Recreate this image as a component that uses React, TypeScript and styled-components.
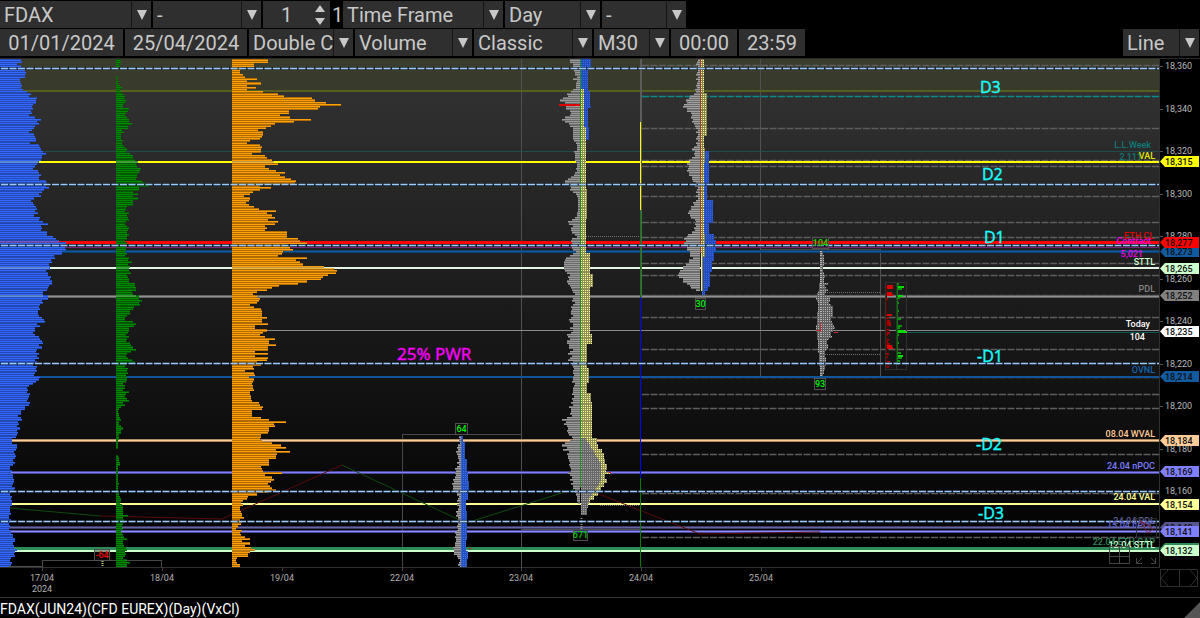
import React from "react";
import styled, { createGlobalStyle } from "styled-components";

const GlobalStyle = createGlobalStyle`
  body { margin: 0; background: #000; }
  * { box-sizing: border-box; }
`;

const Page = styled.main`
  display: flex;
  flex-direction: column;
  background: #000;
  color: #c8c8c8;
  font-family: Roboto, "Liberation Sans", sans-serif;
`;

const Toolbars = styled.header`
  display: flex;
  flex-direction: column;
  gap: 1px;
  padding: 1px 1px 2px 0;
  border-bottom: 1px solid #2b2b2b;
`;

const ToolRow = styled.div`
  display: flex;
  gap: 2px;
  height: 27px;
`;

const Cell = styled.div<{ $w: number }>`
  display: grid;
  grid-template-columns: minmax(0, 1fr) 20px;
  width: ${(p) => p.$w}px;
  background: #2f2f2f;
`;

const Picker = styled.select`
  grid-area: 1 / 1 / 2 / 3;
  appearance: none;
  width: 100%;
  padding: 0 0 0 4px;
  border: 0;
  border-radius: 0;
  background: none;
  color: #c8c8c8;
  font: 20px Roboto, "Liberation Sans", sans-serif;
`;

const ArrowBox = styled.span<{ $plain?: boolean }>`
  grid-area: 1 / 2 / 2 / 3;
  display: grid;
  align-content: center;
  justify-content: center;
  border-left: ${(p) => (p.$plain ? "0" : "1px solid #151515")};
  pointer-events: none;
`;

const Field = styled.input<{ $w?: number }>`
  width: ${(p) => (p.$w ? `${p.$w}px` : "auto")};
  min-width: 0;
  padding: 0;
  border: 0;
  background: #2f2f2f;
  color: #c8c8c8;
  text-align: center;
  font: 20px Roboto, "Liberation Sans", sans-serif;
`;

const Multiplier = styled.span`
  width: 9px;
  font-size: 20px;
  line-height: 28px;
`;

const Spacer = styled.div`
  flex: 1;
`;

const ChartArea = styled.section`
  display: flex;
  height: 539px;
  border-bottom: 1px solid #333;
`;

const Plot = styled.svg`
  flex: 1;
  min-width: 0;
  height: 538px;
  font: 9px Roboto, "Liberation Sans", sans-serif;
`;

const PriceAxis = styled.svg`
  width: 40px;
  height: 538px;
  font: 9px Roboto, "Liberation Sans", sans-serif;
`;

const Status = styled.footer`
  display: flex;
  justify-content: space-between;
  align-items: flex-end;
  height: 20px;
  color: #fff;
  font-size: 14px;
  line-height: 18px;
`;

function Select({ label, value, w }: { label: string; value: string; w: number }) {
  return (
    <Cell $w={w}>
      <Picker aria-label={label} defaultValue={value}>
        <option>{value}</option>
      </Picker>
      <ArrowBox>
        <svg width="10" height="10" aria-hidden="true">
          <path d="M0 0H10L5 10Z" fill="#c8c8c8" />
        </svg>
      </ArrowBox>
    </Cell>
  );
}

/* Price scale: 18,360 sits at y = 66 and each point is 2.13 px tall. */
const PITCH = 2.13;
const rowY = (n: number) => 60 + n * PITCH;
const ROWS = 239;

/* Stretches a list of readings over the rows from..to. */
function spread(list: number[], from: number, to: number) {
  const out: [number, number][] = [];
  for (let n = from; n <= to; n++) {
    out.push([n, list[Math.round(((n - from) * (list.length - 1)) / (to - from))] / 3]);
  }
  return out;
}

const orangeRows = [
  36, 36, 22, 22, 9, 8, 8, 11, 13, 25, 15, 29, 15, 24, 15, 31, 46, 52, 80, 83, 94, 109, 88, 86, 57, 57, 48, 58, 79, 62, 43, 39,
  34, 26, 31, 31, 30, 28, 18, 15, 28, 30, 29, 29, 20, 33, 35, 40, 42, 46, 33, 37, 44, 53, 48, 53, 59, 64, 63, 28, 39, 28, 21,
  18, 12, 18, 17, 14, 17, 22, 27, 44, 35, 40, 43, 36, 46, 43, 33, 35, 33, 55, 55, 55, 66, 68, 75, 53, 58, 61, 51, 50, 46, 75,
  64, 68, 71, 92, 102, 105, 104, 96, 91, 89, 75, 66, 47, 40, 35, 25, 21, 25, 28, 27, 25, 18, 22, 29, 30, 30, 35, 30, 30, 36,
  23, 23, 35, 31, 28, 33, 43, 37, 37, 44, 36, 36, 23, 36, 23, 36, 35, 25, 29, 21, 22, 13, 22, 23, 17, 22, 21, 20, 21, 21, 22,
  18, 18, 19, 19, 20, 27, 28, 31, 30, 20, 20, 20, 29, 37, 54, 42, 43, 37, 37, 36, 29, 29, 28, 30, 40, 49, 54, 44, 58, 45, 44,
  44, 37, 37, 37, 29, 30, 31, 50, 33, 40, 42, 39, 36, 38, 40, 44, 36, 25, 16, 15, 11, 9, 11, 8, 8, 9, 10, 10, 12, 8, 10, 9, 6,
  4, 10, 8, 9, 13, 18, 10, 18, 13, 19, 23, 18, 16, 16, 5, 4, 5, 8, 8,
].map((w) => w * 3);

const blueUpper = [
  62, 65, 52, 62, 72, 75, 78, 76, 74, 60, 60, 62, 66, 64, 68, 82, 92, 88, 112, 108, 108, 98, 95, 100, 92, 97, 88, 105, 122,
  110, 118, 105, 103, 95, 86, 102, 106, 108, 107, 90, 118, 120, 124, 130, 138, 126, 126, 122, 118, 112, 106, 100, 113, 118,
  124, 118, 116, 137, 140, 138, 146, 132, 126, 118, 124, 102, 93, 98, 101, 108, 110, 104, 115, 102, 120, 118, 128, 144, 122,
  126, 124, 141, 140, 158, 167, 178, 197, 190, 194, 199, 186, 185, 162, 164, 153, 157, 148, 150, 150, 137, 143, 145, 153,
  151, 157, 155, 147, 143, 142, 130, 130, 143, 144, 126, 130, 121, 118, 121,
];
const blueLower = [
  115, 114, 117, 126, 132, 135, 112, 119, 104, 104, 98, 105, 118, 120, 126, 128, 118, 126, 112, 107, 116, 112, 118, 104, 112,
  100, 112, 108, 110, 104, 103, 119, 116, 108, 98, 88, 82, 84, 80, 90, 86, 84, 80, 90, 88, 74, 74, 64, 62, 55, 62, 67, 55, 58,
  50, 60, 50, 54, 50, 48, 36, 36, 50, 50, 48, 42, 44, 48, 44, 38, 44, 38, 30, 30, 36, 32, 38, 38, 42, 42, 38, 36, 46, 42, 32,
  30, 36, 33, 36, 36, 36, 30, 30, 30, 32, 27, 27, 32, 30, 28, 30, 27, 32, 33, 40, 38, 46, 44, 38, 42, 42, 50, 46, 42, 44, 32,
  30, 35, 32, 28,
];
const greenUpper = [
  12, 15, 8, 12, 0, 0, 0, 0, 5, 3, 5, 5, 12, 18, 12, 15, 22, 28, 25, 30, 26, 20, 20, 38, 36, 30, 28, 32, 38, 40, 47, 36, 36,
  18, 24, 16, 16, 14, 22, 18, 20, 26, 32, 30, 42, 50, 50, 58, 66, 60, 62, 75, 72, 68, 64, 62, 60, 78, 88, 98, 68, 70, 50, 66,
  52, 66, 50, 52, 50, 32, 30, 28, 38, 34, 35, 40, 30, 28, 32, 38, 36, 34, 38, 32, 34, 26, 34, 30, 30, 30, 28, 32, 28, 38, 36,
  48, 36, 42, 40, 40, 44, 32, 36, 38, 38, 56, 58, 60, 60, 48, 52, 68, 68, 78, 70, 72, 55, 50, 42, 42, 34, 26, 28, 50, 60, 54,
  38, 40, 36, 30, 38,
];
const greenLower = [
  34, 30, 42, 44, 50, 60, 46, 32, 30, 35, 48, 58, 30, 28, 36, 32, 36, 30, 34, 32, 30, 20, 28, 26, 22, 38, 30, 28, 34, 38, 20,
  28, 14, 8, 6, 8, 10, 12, 14, 8, 10, 14, 20, 14, 14, 10, 10, 8, 6, 6, 6, 5, 0, 0, 5, 10, 8, 12, 12, 5, 6, 6, 6, 6, 5, 6, 6,
  8, 6, 6, 6, 8, 10, 12, 14, 16, 12, 18, 20, 20, 22, 22, 36, 22, 24, 24, 22, 18, 22, 16, 18, 22, 24, 34, 22, 22, 24, 30, 34,
  26, 30, 28, 20, 34, 42, 32, 34,
];
const blueRows = [...spread(blueUpper, 0, 117), ...spread(blueLower, 118, ROWS - 1)];
const greenRows = [...spread(greenUpper, 0, 130), ...spread(greenLower, 131, ROWS - 1)];
const goldRows = spread(orangeRows, 0, ROWS - 1);

/* Horizontal volume profile: a dim body with one bright line per price. */
function Profile({ x, rows, body, line }: { x: number; rows: [number, number][]; body: string; line: string }) {
  const shown = rows.filter(([, w]) => w !== 0);
  const bodyPath = shown.map(([n, w]) => `M${x} ${rowY(n) - 1.06}h${w}v${PITCH}h${-w}z`).join("");
  const linePath = shown.map(([n, w]) => `M${x} ${Math.floor(rowY(n)) + 0.5}h${w}`).join("");
  return (
    <g shapeRendering="crispEdges">
      <path d={bodyPath} fill={body} />
      <path d={linePath} stroke={line} />
    </g>
  );
}

type Pt = [number, number];

function widthAt(pts: Pt[], y: number, step?: boolean) {
  for (let i = 1; i < pts.length; i++) {
    if (y <= pts[i][0]) {
      if (step) return pts[i - 1][1];
      const t = (y - pts[i - 1][0]) / (pts[i][0] - pts[i - 1][0]);
      return pts[i - 1][1] + t * (pts[i][1] - pts[i - 1][1]);
    }
  }
  return pts[pts.length - 1][1];
}

/* Time-at-price profile of one day, built out of small cells. dir -1 grows to the left. */
function DayProfile({
  x, pts, color, dim, dir = 1, step, cells,
}: { x: number; pts: Pt[]; color: string; dim: string; dir?: number; step?: boolean; cells?: boolean }) {
  let body = "";
  let line = "";
  for (let n = 0; n < ROWS; n++) {
    const y = rowY(n);
    if (y < pts[0][0] || y > pts[pts.length - 1][0]) continue;
    const wobble = cells || step ? 0 : ((n * 7) % 5) - 2;
    const w = Math.max(1, Math.round(widthAt(pts, y, step) + wobble * 0.6)) * dir;
    body += `M${x} ${y - 1.06}h${w}v${PITCH}h${-w}z`;
    line += `M${x} ${Math.floor(y) + 0.5}h${w}`;
  }
  return (
    <g shapeRendering="crispEdges">
      <path d={body} fill={dim} />
      <path d={line} stroke={color} strokeDasharray={cells ? "1 1" : undefined} />
    </g>
  );
}

const day23Left: number[] = [
  30, 30, 22, 22, 18, 18, 14, 14, 10, 20, 10, 12, 12, 12, 20, 28, 40, 36, 52, 60, 46, 62, 42, 42, 30, 28, 30, 44, 55, 45, 34,
  30, 22, 22, 20, 20, 20, 20, 18, 12, 10, 8, 10, 18, 16, 14, 15, 15, 12, 10, 8, 12, 10, 14, 18, 26, 36, 44, 46, 30, 26, 30,
  20, 12, 10, 6, 6, 6, 6, 6, 6, 6, 8, 10, 14, 24, 36, 34, 20, 28, 28, 24, 14, 10, 24, 28, 24, 20, 24, 20, 12, 20, 30, 42, 46,
  48, 48, 48, 48, 44, 40, 30, 36, 34, 38, 36, 30, 28, 24, 20, 16, 24, 20, 24, 14, 22, 28, 24,
];
const day23LeftLow: number[] = [
  26, 28, 22, 28, 32, 30, 20, 22, 22, 30, 20, 28, 40, 36, 30, 40, 38, 34, 32, 20, 30, 38, 36, 24, 30, 36, 20, 24, 20, 18, 22,
  20, 18, 20, 20, 20, 24, 16, 18, 22, 20, 22, 24, 18, 24, 22, 26, 20, 30, 32, 26, 28, 30, 24, 40, 54, 42, 48, 38, 36, 40, 36,
  36, 32, 24, 20, 30, 46, 54, 40, 52, 34, 40, 36, 36, 32, 34, 30, 32, 30, 28, 26, 36, 30, 24, 30, 22, 28, 20, 22, 20, 16, 14,
  12, 10, 8, 8, 6,
];
const day23Gray = [...spread(day23Left, 0, 117), ...spread(day23LeftLow, 118, 208)].map(([n, w]) => [n, -w] as [number, number]);

const day23Blue: Pt[] = [[59, 10], [69, 7], [90, 9], [106, 10], [108, 7], [128, 8], [139, 5], [146, 5]];
const day23Yellow: Pt[] = [
  [89, 3], [128, 5], [189, 6], [219, 5], [253, 9], [273, 12], [286, 9], [333, 11], [344, 6], [367, 8], [382, 6], [393, 10],
  [402, 11], [438, 16], [444, 17], [449, 21], [453, 23], [459, 24], [463, 26], [469, 25], [472, 29], [474, 24], [478, 26],
  [482, 23], [487, 20], [492, 17], [496, 13], [500, 9], [505, 5], [506, 5],
];
const day23Inner: Pt[] = [
  [438, 4], [445, 9], [454, 14], [463, 20], [480, 20], [487, 16], [497, 9], [503, 7], [514, 6],
];
const day22Gray: Pt[] = [
  [436, 1], [443, 2], [452, 4], [454, 5], [458, 2], [463, 3], [470, 5], [477, 6], [482, 8], [487, 9], [492, 6], [495, 3],
  [510, 3], [515, 5], [520, 3], [530, 4], [538, 6], [543, 5], [549, 8], [555, 6], [559, 2], [567, 2],
];
const day22Blue: Pt[] = [
  [435, 2], [443, 4], [460, 6], [473, 7], [480, 8], [492, 7], [500, 5], [510, 6], [530, 6], [540, 5], [550, 7], [560, 6], [567, 5],
];
const day24Gray: Pt[] = [
  [59, 3], [86, 3], [93, 5], [98, 11], [103, 15], [106, 16], [111, 12], [116, 8], [124, 7], [128, 3], [143, 3], [149, 7],
  [154, 5], [159, 9], [164, 12], [171, 12], [176, 10], [183, 5], [189, 3], [199, 3], [211, 11], [216, 10], [223, 3], [233, 8],
  [238, 15], [243, 16], [248, 13], [253, 10], [258, 8], [263, 13], [268, 17], [274, 23], [279, 18], [283, 15], [286, 10],
  [289, 6], [292, 1],
];
const day24Yellow: Pt[] = [[59, 3], [92, 6], [136, 3], [149, 4], [163, 3], [233, 4], [256, 2], [291, 2]];
const day24Blue: Pt[] = [
  [151, 7], [184, 5], [199, 11], [224, 7], [234, 12], [240, 14], [250, 12], [262, 10], [272, 8], [286, 6], [292, 3], [296, 1],
];
const day25Left: Pt[] = [
  [250, 1], [279, 1], [288, 2], [293, 3], [298, 5], [303, 3], [320, 4], [330, 5], [335, 4], [347, 3], [357, 2], [376, 1],
];
const day25Right: Pt[] = [
  [250, 2], [258, 3], [271, 2], [278, 4], [281, 1], [283, 8], [286, 4], [290, 7], [294, 4], [299, 10], [303, 8], [307, 12],
  [315, 12], [319, 9], [325, 13], [329, 14], [334, 9], [337, 11], [340, 6], [347, 7], [352, 4], [364, 5], [372, 3], [377, 1],
];

const guides = [65, 128, 160, 166, 196, 222, 237, 263, 275, 295, 317, 349, 377, 394, 408, 454, 493, 537];
const bands = [68, 184, 245, 363, 491, 521];

const levels: { y: number; h: number; color: string; core?: string; from?: number }[] = [
  { y: 90, h: 2, color: "#565f1b" },
  { y: 151, h: 1, color: "#1f4c4c" },
  { y: 161, h: 2, color: "#ffff00" },
  { y: 241, h: 3, color: "#ff0000" },
  { y: 247, h: 1, color: "#7a237a" },
  { y: 250, h: 3, color: "#0c3f6c", core: "#115a9f" },
  { y: 267, h: 2, color: "#e4f5e4" },
  { y: 295, h: 3, color: "#626262", core: "#909090" },
  { y: 330, h: 1, color: "#8a8a8a", from: 232 },
  { y: 376, h: 2, color: "#0f5597" },
  { y: 439, h: 3, color: "#b08a62", core: "#ffcc99" },
  { y: 471, h: 3, color: "#4a4a98", core: "#8080ff" },
  { y: 503, h: 2, color: "#ffff99" },
  { y: 526, h: 3, color: "#3c3c62", core: "#66669c" },
  { y: 530, h: 3, color: "#4a4a98", core: "#8c8cff" },
  { y: 547, h: 3, color: "#2e8b57" },
  { y: 550, h: 2, color: "#ccffcc" },
];

/* Labels measured back from the right edge of the plot. */
const labels: { t: string; x: number; y: number; color: string }[] = [
  { t: "L.L.Week", x: -9, y: 148, color: "#0f7a7a" },
  { t: "2,111", x: -18, y: 160, color: "#0f7a7a" },
  { t: "VAL", x: -5, y: 159, color: "#e8e800" },
  { t: "ETH CL", x: -6, y: 239, color: "#e00000" },
  { t: "Contract", x: -9, y: 244, color: "#f000f0" },
  { t: "5,021", x: -17, y: 257, color: "#f000f0" },
  { t: "STTL", x: -5, y: 265, color: "#ccffcc" },
  { t: "PDL", x: -5, y: 292, color: "#858585" },
  { t: "Today", x: -10, y: 327, color: "#ffffff" },
  { t: "104", x: -15, y: 340, color: "#ffffff" },
  { t: "OVNL", x: -5, y: 373, color: "#1463ae" },
  { t: "08.04 WVAL", x: -5, y: 437, color: "#ffcc99" },
  { t: "24.04 nPOC", x: -5, y: 469, color: "#7c7cff" },
  { t: "24.04 VAL", x: -5, y: 500, color: "#ffff99" },
  { t: "24.04 PDL", x: -5, y: 524, color: "#5c5c98" },
  { t: "15.04 nPOC", x: -5, y: 528, color: "#6868d8" },
  { t: "22.04 ETH GAP", x: -5, y: 545, color: "#2e8b57" },
  { t: "12.04 STTL", x: -5, y: 548, color: "#ccffcc" },
];

const tags: { t: string; y: number; color: string }[] = [
  { t: "18,315", y: 161, color: "#ffff00" },
  { t: "18,273", y: 251, color: "#115a9f" },
  { t: "18,277", y: 242, color: "#ff0000" },
  { t: "18,265", y: 268, color: "#ccffcc" },
  { t: "18,252", y: 295, color: "#808080" },
  { t: "18,235", y: 331, color: "#ffffff" },
  { t: "18,214", y: 376, color: "#115a9f" },
  { t: "18,184", y: 440, color: "#ffcc99" },
  { t: "18,169", y: 471, color: "#8080ff" },
  { t: "18,154", y: 504, color: "#ffff99" },
  { t: "18,142", y: 527, color: "#55558f" },
  { t: "18,141", y: 531, color: "#8080ff" },
  { t: "18,133", y: 548, color: "#2e8b57" },
  { t: "18,132", y: 550, color: "#ccffcc" },
];

const dates: [number, string][] = [
  [42, "17/04"], [162, "18/04"], [282, "19/04"], [402, "22/04"], [521, "23/04"], [641, "24/04"], [761, "25/04"],
];

const counts: { t: string; x: number; y: number; w: number; color: string }[] = [
  { t: "-64", x: 94, y: 549, w: 16, color: "#f00000" },
  { t: "64", x: 455, y: 423, w: 13, color: "#00f000" },
  { t: "671", x: 573, y: 529, w: 15, color: "#00d000" },
  { t: "30", x: 695, y: 298, w: 11, color: "#00f000" },
  { t: "104", x: 812, y: 237, w: 17, color: "#20d800" },
  { t: "93", x: 814, y: 378, w: 12, color: "#00f000" },
];

const deviations: [string, number, number][] = [
  ["D3", 980, 93], ["D2", 982, 180], ["D1", 984, 243], ["-D1", 977, 362], ["-D2", 976, 450], ["-D3", 978, 519],
];

const sells: Pt[] = [
  [285, 7], [287, 7], [292, 6], [294, 7], [298, 2], [302, 1], [308, 1], [314, 6], [317, 3], [320, 4], [322, 5], [324, 5],
  [329, 3], [332, 4], [334, 2], [337, 1], [339, 3], [341, 2], [343, 4], [345, 6], [347, 7], [353, 3], [356, 2], [361, 4],
  [363, 5], [366, 3],
];
const buys: Pt[] = [
  [283, 2], [286, 7], [288, 5], [291, 1], [295, 6], [297, 3], [302, 2], [306, 1], [310, 2], [313, 1], [318, 4], [320, 1],
  [325, 5], [327, 3], [330, 7], [331, 10], [334, 2], [338, 1], [342, 2], [348, 1], [352, 4], [355, 6], [357, 5], [360, 3],
  [363, 2],
];

/* Price levels that shine through the three volume profiles: x, y, width. */
const glints: [number, number, number][] = [
  [0, 161, 38], [116, 161, 22], [232, 161, 42],
  [0, 241, 60], [232, 241, 70],
  [0, 267, 49], [116, 267, 14], [232, 267, 100],
  [0, 295, 43], [116, 295, 20],
];

function DashedBand({ y }: { y: number }) {
  return (
    <>
      <rect x="0" y={y - 1} width="100%" height="3" fill="#101820" fillOpacity="0.55" />
      <line x1="1" x2="100%" y1={y + 0.5} y2={y + 0.5} stroke="#9accff" strokeWidth="1.6" strokeDasharray="7 1.5" />
    </>
  );
}

function Chart() {
  return (
    <Plot role="img" aria-label="FDAX volume profile chart">
      <defs>
        <linearGradient id="backdrop" x1="0" y1="0" x2="0" y2="1">
          <stop offset="0" stopColor="#343434" />
          <stop offset="0.5" stopColor="#1a1a1a" />
          <stop offset="1" stopColor="#000000" />
        </linearGradient>
      </defs>
      <g transform="translate(0 -59)">
        <rect x="0" y="59" width="100%" height="508" fill="url(#backdrop)" />
        <rect x="0" y="59" width="100%" height="31" fill="#4a5020" fillOpacity="0.3" />

        {guides.map((y) => (
          <line
            key={y} x1="642" x2="100%" y1={y + 0.5} y2={y + 0.5}
            stroke="#5e5e5e" strokeWidth="1.6" strokeDasharray="7 1.5"
          />
        ))}
        <line x1="642" x2="100%" y1="96.5" y2="96.5" stroke="#0b8a8a" strokeWidth="1.6" strokeDasharray="7 1.5" />

        <g shapeRendering="crispEdges">
          <path d="M521.5 59V567M760.5 59V377M880.5 249V377" stroke="#505050" fill="none" />
          <path d="M402.5 567V434.5H521M761 249.5H880M42.5 567V560.5H161.5V567" stroke="#484848" fill="none" />
          <path d="M0 566.5H42M521 529.5H641" stroke="#505050" fill="none" />

          {levels.map((l) => (
            <g key={l.y}>
              <rect x={l.from ?? 0} y={l.y} width="100%" height={l.h} fill={l.color} />
              {l.core && <rect x="0" y={l.y + 1} width="100%" height="1" fill={l.core} />}
            </g>
          ))}
          <path d="M907 332.5H2400" stroke="#0a5858" />
          <path d="M586 236.5H641M821 292.5H880M821 354.5H880M600 505.5H641" stroke="#707070" strokeDasharray="1 1" fill="none" />
        </g>

        <g fill="none" strokeWidth="1">
          <path d="M10 508L100 516" stroke="#0e4a0e" />
          <path d="M100 516L222 519L342 465" stroke="#5a0c0c" />
          <path d="M342 465L466 523L581 487" stroke="#0e4a0e" />
          <path d="M581 487L700 534L820 532" stroke="#5a0c0c" />
        </g>

        <Profile x={0} rows={blueRows} body="rgba(35,75,190,0.95)" line="#3468ff" />
        <Profile x={116} rows={greenRows} body="rgba(0,92,0,0.92)" line="#008a00" />
        <Profile x={232} rows={goldRows} body="rgba(184,112,0,0.95)" line="#ff9f0a" />

        <Profile x={580} rows={day23Gray} body="#6a6a6a" line="#9a9a9a" />
        <rect x="559" y="104" width="21" height="2" fill="#e00000" />
        <DayProfile x={581} pts={day23Blue} color="#3a66e8" dim="#244cb8" step cells />
        <DayProfile x={581} pts={day23Yellow} color="#ffff99" dim="#8f8f56" step cells />
        <DayProfile x={581} pts={day23Inner} color="#a6a6a6" dim="#686868" cells />
        <path d="M580.5 59V487" stroke="#18901c" />
        <path d="M581.5 518V530" stroke="#909090" strokeWidth="2" strokeDasharray="1 1" />
        <rect x="609" y="472" width="2" height="1" fill="#ff0000" />

        <DayProfile x={461} pts={day22Gray} color="#a0a0a0" dim="#6c6c6c" dir={-1} />
        <DayProfile x={461} pts={day22Blue} color="#3a70ff" dim="#2450b8" step cells />
        <path d="M461.5 436V567" stroke="#3565d8" />
        <rect x="469" y="548" width="2" height="1" fill="#ff0000" />

        <DayProfile x={700} pts={day24Gray} color="#a0a0a0" dim="#6c6c6c" dir={-1} />
        <DayProfile x={702} pts={day24Blue} color="#3a66e8" dim="#244cb8" step cells />
        <DayProfile x={701} pts={day24Yellow} color="#ffff99" dim="#85854c" step cells />
        <path d="M700.5 59V253" stroke="#a03a30" />
        <path d="M701.5 253V291" stroke="#e8e8a0" />

        <DayProfile x={821} pts={day25Left} color="#b4b4b4" dim="#606060" dir={-1} cells />
        <DayProfile x={821} pts={day25Right} color="#b4b4b4" dim="#606060" cells />
        <path d="M820.5 322V332M816 330.5H821M834 332.5H838" stroke="#c03030" />
        <path d="M102.5 561V567" stroke="#c8c88c" strokeWidth="2" strokeDasharray="1 1" />

        <g shapeRendering="crispEdges">
          <rect x="640" y="59" width="2" height="63" fill="#5c5c5c" />
          <rect x="641" y="122" width="1" height="175" fill="#5c5c5c" />
          <rect x="640" y="122" width="1" height="88" fill="#ffff00" />
          <rect x="640" y="210" width="1" height="87" fill="#008000" />
          <rect x="640" y="297" width="1" height="181" fill="#0000ff" />
          <rect x="640" y="478" width="1" height="89" fill="#008000" />
        </g>

        <g shapeRendering="crispEdges">
          <path d="M885.5 282.5H906.5V369.5H885.5ZM896.5 282V369" fill="none" stroke="#303030" />
          {sells.map(([y, w]) => (
            <rect key={y} x="886" y={y} width={w} height="2" fill={w > 5 ? "#dc0000" : "#a00000"} />
          ))}
          <path d="M886.5 285V368" stroke="#600000" />
          {buys.map(([y, w]) => (
            <rect key={y} x="897" y={y} width={w} height="2" fill={w > 5 ? "#00dc00" : "#009a00"} />
          ))}
          <path d="M897.5 283V364" stroke="#008000" />
        </g>

        {glints.map(([x, y, w]) => (
          <rect key={`${x}-${y}`} x={x} y={y} width={w} height="2" fill={y === 241 ? "#ff4040" : "#c8e8c8"} fillOpacity="0.3" />
        ))}
        {bands.map((y) => (
          <DashedBand key={y} y={y} />
        ))}

        {counts.map((c) => (
          <g key={c.t}>
            <rect x={c.x + 0.5} y={c.y + 0.5} width={c.w - 1} height="11" fill="#141414" fillOpacity="0.4" stroke="#505050" />
            <text x={c.x + c.w / 2} y={c.y + 9} fill={c.color} textAnchor="middle" fontWeight="500">{c.t}</text>
          </g>
        ))}

        <g fontFamily='"Open Sans", "Noto Sans", sans-serif' strokeWidth="0.4">
          <text x="397" y="360" fontSize="17" fill="#ff00ff" stroke="#ff00ff">25% PWR</text>
          {deviations.map(([t, x, y]) => (
            <text key={t} x={x} y={y} fontSize="16" fill="#18ffff" stroke="#18ffff">{t}</text>
          ))}
        </g>

        <svg x="100%" y="0" width="1" height="600" overflow="visible">
          {labels.map((l) => (
            <text key={l.t} x={l.x} y={l.y} fill={l.color} textAnchor="end" fontWeight="500">{l.t}</text>
          ))}
          <g fill="none" stroke="#444">
            <path d="M-50.5 546.5H-30.5V563.5H-50.5ZM-40.5 546V564M-50 556.5H-31" />
            <path d="M-18 558L-23 563M-23.5 558V563.5H-18M-9 558L-4 563M-9 563.5H-4.5V558" />
            <path d="M-23.5 518.5H-3.5V537.5H-23.5Z" stroke="#2c2c34" />
            <path d="M-20 521L-12 525L-7 529L-12 533L-20 521" stroke="#802030" />
          </g>
          <path d="M-0.5 59V567" stroke="#303030" />
        </svg>

        <path d="M0 567.5H4000" stroke="#303030" />
        {dates.map(([x, t]) => (
          <g key={t}>
            <path d={`M${x + 0.5} 567V571`} stroke="#444" />
            <text x={x} y="581" fill="#b0b0b0" textAnchor="middle">{t}</text>
          </g>
        ))}
        <text x="42" y="592" fill="#b0b0b0" textAnchor="middle">2024</text>
      </g>
    </Plot>
  );
}

function Prices() {
  const ticks = Array.from({ length: 10 }, (_, i) => 18360 - i * 20);
  return (
    <PriceAxis role="img" aria-label="Price axis">
      <g transform="translate(0 -59)">
        {ticks.map((p, i) => (
          <g key={p}>
            <path d={`M0 ${Math.round(66 + i * 42.5) + 0.5}h3`} stroke="#555" />
            <text x="5" y={Math.round(69 + i * 42.5)} fill="#b8b8b8">{p.toLocaleString("en-US")}</text>
          </g>
        ))}
        <text x="5" y="494" fill="#b8b8b8">18,160</text>
        {tags.map((t) => (
          <g key={t.t}>
            <path d={`M0 ${t.y + 0.5}L5 ${t.y - 5}H39V${t.y + 6}H5Z`} fill={t.color} />
            <text x="5" y={t.y + 4} fill="#101010" fontWeight="500">{t.t}</text>
          </g>
        ))}
        <path d="M0.5 569.5H37.5V586.5H0.5ZM19.5 569V587M8 570L1 578L8 586M30 570L37 578L30 586" fill="none" stroke="#2e2e2e" />
      </g>
    </PriceAxis>
  );
}

export default function App() {
  return (
    <Page>
      <GlobalStyle />
      <Toolbars>
        <ToolRow>
          <Select label="Symbol" value="FDAX" w={151} />
          <Select label="Contract" value="-" w={108} />
          <Cell $w={67}>
            <Field aria-label="Period" defaultValue="1" />
            <ArrowBox $plain>
              <svg width="10" height="20" aria-hidden="true">
                <path d="M0 7L5 0L10 7ZM0 13H10L5 20Z" fill="#c8c8c8" />
              </svg>
            </ArrowBox>
          </Cell>
          <Multiplier>1</Multiplier>
          <Select label="Period type" value="Time Frame" w={160} />
          <Select label="Time frame" value="Day" w={95} />
          <Select label="Session" value="-" w={84} />
        </ToolRow>
        <ToolRow>
          <Field aria-label="From date" defaultValue="01/01/2024" $w={123} />
          <Field aria-label="To date" defaultValue="25/04/2024" $w={122} />
          <Select label="Click mode" value="Double C" w={104} />
          <Select label="Profile source" value="Volume" w={117} />
          <Select label="Profile style" value="Classic" w={118} />
          <Select label="Resolution" value="M30" w={75} />
          <Field aria-label="From time" defaultValue="00:00" $w={66} />
          <Field aria-label="To time" defaultValue="23:59" $w={66} />
          <Spacer />
          <Select label="Drawing" value="Line" w={76} />
        </ToolRow>
      </Toolbars>
      <ChartArea>
        <Chart />
        <Prices />
      </ChartArea>
      <Status>
        <span>FDAX(JUN24)(CFD EUREX)(Day)(VxCl)</span>
        <svg width="16" height="16" aria-hidden="true">
          <path d="M16 0V16H0Z" fill="#555" />
        </svg>
      </Status>
    </Page>
  );
}
